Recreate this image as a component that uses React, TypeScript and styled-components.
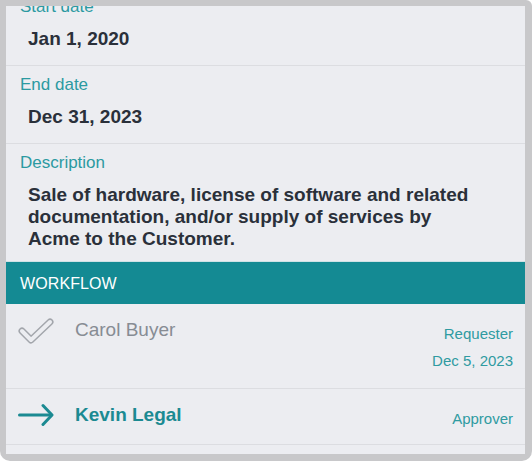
import React from 'react';
import styled, { createGlobalStyle } from 'styled-components';

const GlobalStyle = createGlobalStyle`
  html, body {
    margin: 0;
    padding: 0;
    background: #ffffff;
  }
  * {
    box-sizing: border-box;
  }
`;

const Frame = styled.div`
  width: 532px;
  height: 461px;
  background: #c8c8ca;
  border-radius: 0 6px 10px 10px;
  padding: 6px 7px 7px 6px;
  font-family: 'Liberation Sans', Arial, sans-serif;
`;

const Screen = styled.div`
  width: 100%;
  height: 100%;
  background: #ecedf1;
  overflow: hidden;
`;

// the view is scrolled a bit, so the first label is cut off
const Scroller = styled.div`
  margin-top: -18px;
`;

const Field = styled.div<{ $last?: boolean }>`
  padding: 9px 0 ${(p) => (p.$last ? '11px' : '15px')};
  border-bottom: ${(p) => (p.$last ? 'none' : '1px solid #dcdde1')};
`;

const Label = styled.div`
  padding-left: 14px;
  font-size: 17px;
  line-height: 20px;
  color: #2b9aa1;
`;

const Value = styled.div`
  margin-top: 11px;
  padding: 0 40px 0 22px;
  font-size: 19px;
  line-height: 22px;
  font-weight: 700;
  color: #2a303a;
`;

const SectionHeader = styled.div`
  height: 43px;
  border-top: 1px solid #cfe2e5;
  background: #148a93;
  display: flex;
  align-items: center;
  padding: 1px 0 0 14px;
  font-size: 16px;
  color: #ffffff;
  letter-spacing: 0.1px;
`;

const StepRow = styled.div<{ $padBottom: number }>`
  display: flex;
  align-items: flex-start;
  padding: 14px 12px ${(p) => p.$padBottom}px 12px;
  border-bottom: 1px solid #dcdde1;
`;

const IconBox = styled.div`
  width: 36px;
  height: 24px;
  flex: none;

  svg {
    display: block;
    margin-top: -2px;
  }
`;

const Name = styled.div<{ $active?: boolean }>`
  flex: 1;
  margin-left: 21px;
  font-size: 19px;
  line-height: 24px;
  font-weight: ${(p) => (p.$active ? 700 : 400)};
  color: ${(p) => (p.$active ? '#1b8a92' : '#878c94')};
`;

const Meta = styled.div`
  padding-top: 2px;
  text-align: right;
  font-size: 15px;
  line-height: 27px;
  color: #2f9ba1;
`;

const CheckIcon = () => (
  <svg width="36" height="28" viewBox="0 0 36 28">
    <path d="M4 15 L13 24 L32 6" fill="none" stroke="#a3a6ac" strokeWidth="7" strokeLinecap="round" strokeLinejoin="round" />
    <path d="M4 15 L13 24 L32 6" fill="none" stroke="#ecedf1" strokeWidth="4" strokeLinecap="round" strokeLinejoin="round" />
  </svg>
);

const ArrowIcon = () => (
  <svg width="36" height="28" viewBox="0 0 36 28">
    <path d="M1.5 14 H33" fill="none" stroke="#1b8a92" strokeWidth="3" strokeLinecap="round" />
    <path d="M25 4.5 L34 14 L25 23.5" fill="none" stroke="#1b8a92" strokeWidth="3" strokeLinecap="round" strokeLinejoin="round" />
  </svg>
);

const App: React.FC = () => {
  return (
    <>
      <GlobalStyle />
      <Frame>
        <Screen>
          <Scroller>
            <Field>
              <Label>Start date</Label>
              <Value>Jan 1, 2020</Value>
            </Field>
            <Field>
              <Label>End date</Label>
              <Value>Dec 31, 2023</Value>
            </Field>
            <Field $last>
              <Label>Description</Label>
              <Value>
                Sale of hardware, license of software and related documentation, and/or supply of services by Acme to the Customer.
              </Value>
            </Field>
            <SectionHeader>WORKFLOW</SectionHeader>
            <StepRow $padBottom={14}>
              <IconBox>
                <CheckIcon />
              </IconBox>
              <Name>Carol Buyer</Name>
              <Meta>
                <div>Requester</div>
                <div>Dec 5, 2023</div>
              </Meta>
            </StepRow>
            <StepRow $padBottom={12}>
              <IconBox>
                <ArrowIcon />
              </IconBox>
              <Name $active>Kevin Legal</Name>
              <Meta>
                <div>Approver</div>
              </Meta>
            </StepRow>
          </Scroller>
        </Screen>
      </Frame>
    </>
  );
};

export default App;
